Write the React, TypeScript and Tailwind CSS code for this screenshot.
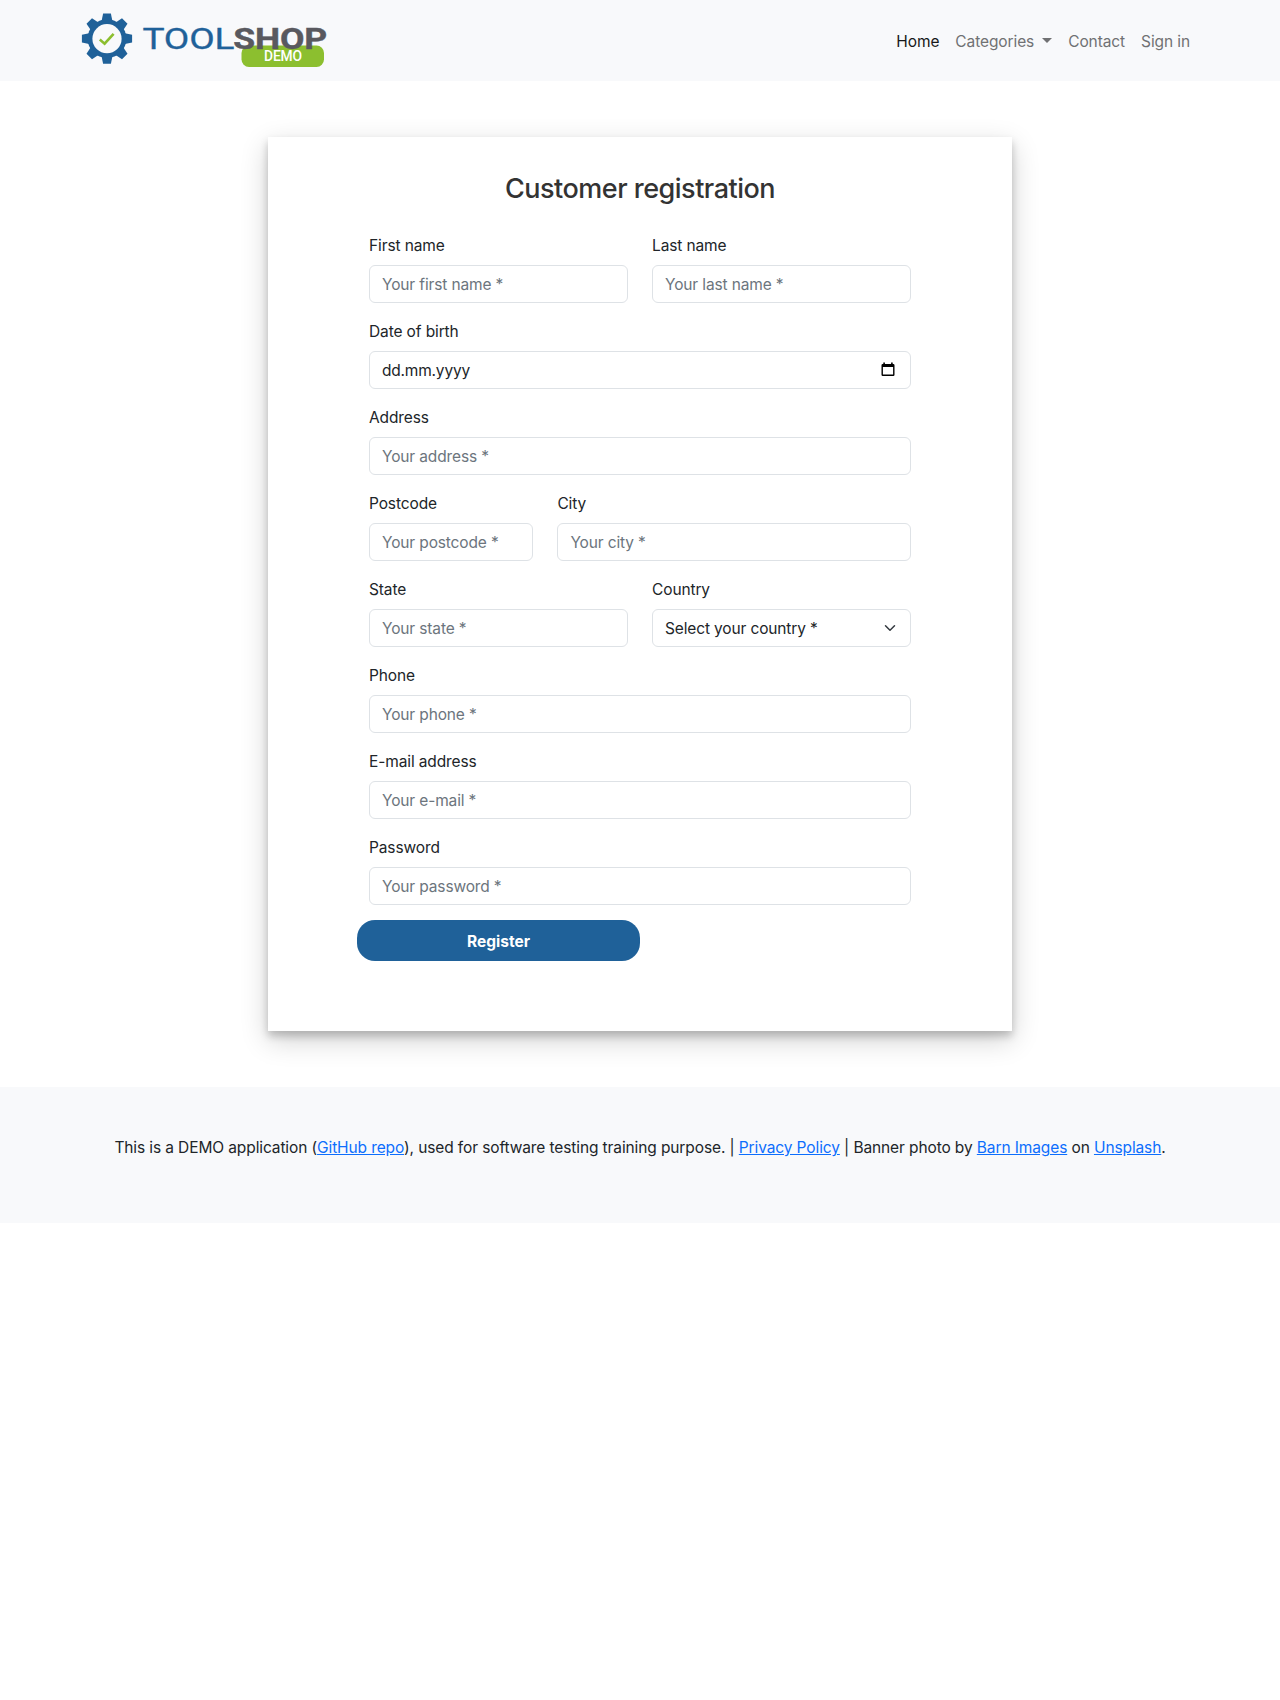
import type { ReactNode } from "react";

const control =
  "block h-[38px] w-full rounded-md border border-[#dee2e6] bg-white px-3 text-[15.5px] leading-6 tracking-[-0.14px] text-[#212529] outline-none placeholder:text-[#6c757d] placeholder:opacity-100";

function Field({ id, label, className = "", children }: { id: string; label: string; className?: string; children: ReactNode }) {
  return (
    <div className={className}>
      <label htmlFor={id} className="mb-[7px] block pt-px leading-6">
        {label}
      </label>
      {children}
    </div>
  );
}

function TextField({ id, label, type = "text", placeholder, className }: { id: string; label: string; type?: string; placeholder: string; className?: string }) {
  return (
    <Field id={id} label={label} className={className}>
      <input id={id} type={type} placeholder={placeholder} className={control} />
    </Field>
  );
}

function Logo() {
  return (
    <svg width="250" height="60" viewBox="80 10 250 60" role="img" aria-label="Toolshop demo">
      <g fill="#1f6199">
        <circle cx="107" cy="38.7" r="19.4" />
        {[0, 45, 90, 135, 180, 225, 270, 315].map((angle) => (
          <path key={angle} d="M101.4 22 L103.1 13.6 H110.9 L112.6 22 Z" transform={`rotate(${angle} 107 38.7)`} />
        ))}
      </g>
      <circle cx="107" cy="38.7" r="14.6" fill="#f8f9fb" />
      <path d="M99.8 39.6 L104.6 43.7 L113.6 33.9" fill="none" stroke="#8cbf2f" strokeWidth="2.6" />
      <rect x="241.5" y="45.5" width="82.5" height="21.5" rx="7.5" fill="#8cbf2f" />
      <text x="142.4" y="48.6" fill="#1f6199" stroke="#1f6199" strokeWidth="0.3" fontFamily="Roboto" fontSize="28.8" textLength="92" lengthAdjust="spacingAndGlyphs">
        TOOL
      </text>
      <text x="233.3" y="48.6" fill="#59595f" stroke="#59595f" strokeWidth="0.4" fontFamily="Roboto" fontWeight="700" fontSize="28.8" textLength="93.8" lengthAdjust="spacingAndGlyphs">
        SHOP
      </text>
      <text x="264" y="60.9" fill="#fff" fontFamily="Roboto" fontWeight="500" fontSize="14" textLength="38" lengthAdjust="spacingAndGlyphs">
        DEMO
      </text>
    </svg>
  );
}

function Header() {
  return (
    <header className="h-[81px] bg-[#f8f9fb]">
      <div className="flex items-start justify-between pt-[10px] pr-[90px] pl-[80px]">
        <Logo />
        <nav className="flex gap-4 pt-5 leading-6 tracking-[-0.1px] text-[#707173]">
          <a href="#" className="text-[#171819]">Home</a>
          <a href="#" className="flex items-center">
            Categories
            <span className="mt-[-3px] ml-[8px] border-x-[5px] border-t-[5px] border-x-transparent border-t-current" />
          </a>
          <a href="#">Contact</a>
          <a href="#">Sign in</a>
        </nav>
      </div>
    </header>
  );
}

function RegistrationForm() {
  return (
    <form className="mx-auto w-[542px]" onSubmit={(e) => e.preventDefault()}>
      <div className="grid grid-cols-2 gap-x-6">
        <TextField id="first" label="First name" placeholder="Your first name *" />
        <TextField id="last" label="Last name" placeholder="Your last name *" />
      </div>
      <Field id="dob" label="Date of birth" className="mt-4">
        <div id="dob" className={control + " flex items-center justify-between"}>
          <span className="pt-px tracking-[-0.2px]">dd.mm.yyyy</span>
          <svg width="14" height="15" viewBox="0 0 14 15" className="mr-[3px] mb-[2px]">
            <path d="M2.3 0.6h1.6V2h6.2V0.6h1.6V2h.6q1.2 0 1.2 1.2v9.6q0 1.2-1.2 1.2H1.7q-1.2 0-1.2-1.2V3.2Q.5 2 1.7 2h.6zM1.9 5v7.6h10.2V5z" fill="#000" fillRule="evenodd" />
          </svg>
        </div>
      </Field>
      <TextField id="address" label="Address" placeholder="Your address *" className="mt-4" />
      <div className="mt-4 flex gap-6">
        <TextField id="postcode" label="Postcode" placeholder="Your postcode *" className="w-[164.4px]" />
        <TextField id="city" label="City" placeholder="Your city *" className="flex-1" />
      </div>
      <div className="mt-4 grid grid-cols-2 gap-x-6">
        <TextField id="state" label="State" placeholder="Your state *" />
        <Field id="country" label="Country">
          <div id="country" className={control + " flex items-center justify-between"}>
            <span className="pt-px">Select your country *</span>
            <svg width="16" height="12" viewBox="0 0 16 16" fill="none" stroke="#343a40" strokeWidth="2" strokeLinecap="round" strokeLinejoin="round">
              <path d="m2 5 6 6 6-6" />
            </svg>
          </div>
        </Field>
      </div>
      <TextField id="phone" label="Phone" placeholder="Your phone *" className="mt-4" />
      <TextField id="email" label="E-mail address" placeholder="Your e-mail *" className="mt-4" />
      <TextField id="password" label="Password" type="password" placeholder="Your password *" className="mt-4" />
      <button type="submit" className="mt-[15px] -ml-3 block h-[41px] w-[283px] rounded-[18px] bg-[#1f6199] pt-[3px] font-bold tracking-normal text-white">
        Register
      </button>
    </form>
  );
}

function Link({ children }: { children: ReactNode }) {
  return (
    <a href="#" className="text-[#0d6efd] underline">
      {children}
    </a>
  );
}

export default function App() {
  return (
    <div className="bg-white font-['Inter',sans-serif] text-[15.5px] tracking-[-0.12px] text-[#212529]">
      <Header />
      <main className="pt-14 pb-14">
        <section className="mx-auto h-[894px] w-[744px] bg-white pt-[35px] shadow-[0_5px_8px_0_rgba(0,0,0,0.2),0_9px_26px_0_rgba(0,0,0,0.19)]">
          <h3 className="mb-[27px] text-center text-[27px] leading-[34px] font-medium tracking-[-0.5px] text-[#333]">Customer registration</h3>
          <RegistrationForm />
        </section>
      </main>
      <footer className="h-[136px] bg-[#f8f9fb] pt-[49px] text-center leading-6 tracking-[-0.11px]">
        This is a DEMO application (<Link>GitHub repo</Link>), used for software testing training purpose. | <Link>Privacy Policy</Link> | Banner photo by <Link>Barn Images</Link> on <Link>Unsplash</Link>.
      </footer>
    </div>
  );
}
